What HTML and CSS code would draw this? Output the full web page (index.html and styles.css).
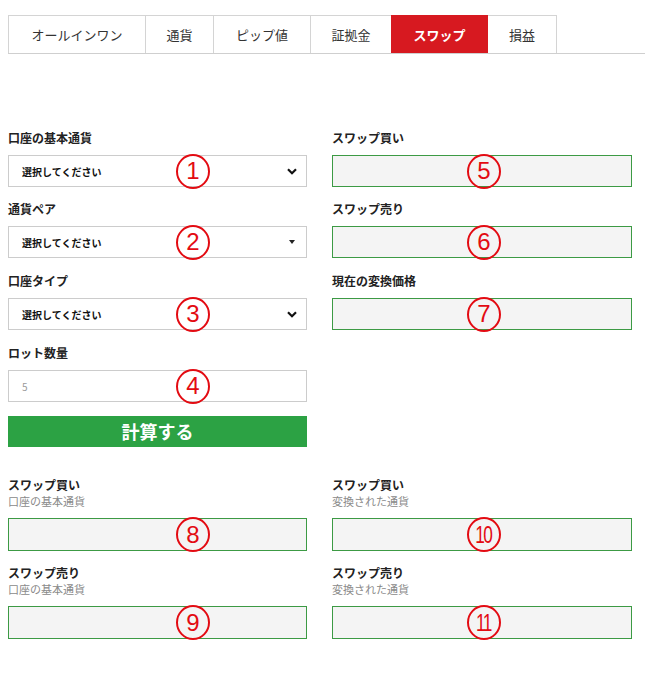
FILE: index.html
```html
<!DOCTYPE html>
<html lang="ja">
<head>
    <meta charset="UTF-8">
    <meta name="viewport" content="width=device-width, initial-scale=1.0">
    <title>スワップ計算機</title>
    <link rel="stylesheet" href="styles.css">
</head>
<body>
    <nav class="tabs">
        <a class="tab tab-all">オールインワン</a>
        <a class="tab tab-cur">通貨</a>
        <a class="tab tab-pip">ピップ値</a>
        <a class="tab tab-margin">証拠金</a>
        <a class="tab tab-swap active">スワップ</a>
        <a class="tab tab-pl">損益</a>
    </nav>

    <div class="calc">
        <div class="col">
            <div class="group">
                <label class="label">口座の基本通貨</label>
                <div class="field select">
                    <span>選択してください</span>
                    <svg class="chevron" width="10" height="7" viewBox="0 0 10 7"><path d="M1 1.2 L5 5.2 L9 1.2" fill="none" stroke="#111" stroke-width="2.2"/></svg>
                    <span class="mark mark-left">1</span>
                </div>
            </div>
            <div class="group">
                <label class="label">通貨ペア</label>
                <div class="field select">
                    <span>選択してください</span>
                    <svg class="caret" width="6" height="4" viewBox="0 0 6 4"><path d="M0 0 L6 0 L3 4 Z" fill="#222"/></svg>
                    <span class="mark mark-left">2</span>
                </div>
            </div>
            <div class="group">
                <label class="label">口座タイプ</label>
                <div class="field select">
                    <span>選択してください</span>
                    <svg class="chevron" width="10" height="7" viewBox="0 0 10 7"><path d="M1 1.2 L5 5.2 L9 1.2" fill="none" stroke="#111" stroke-width="2.2"/></svg>
                    <span class="mark mark-left">3</span>
                </div>
            </div>
            <div class="group">
                <label class="label">ロット数量</label>
                <div class="field input">
                    <span>5</span>
                    <span class="mark mark-left">4</span>
                </div>
            </div>
            <button type="button" class="calc-btn">計算する</button>
        </div>

        <div class="col">
            <div class="group">
                <label class="label">スワップ買い</label>
                <div class="field result">
                    <span class="mark mark-right">5</span>
                </div>
            </div>
            <div class="group">
                <label class="label">スワップ売り</label>
                <div class="field result">
                    <span class="mark mark-right">6</span>
                </div>
            </div>
            <div class="group">
                <label class="label">現在の変換価格</label>
                <div class="field result">
                    <span class="mark mark-right">7</span>
                </div>
            </div>
        </div>
    </div>

    <div class="results">
        <div class="col">
            <div class="out">
                <div class="label">スワップ買い</div>
                <div class="sub">口座の基本通貨</div>
                <div class="field result tall">
                    <span class="mark mark-left">8</span>
                </div>
            </div>
            <div class="out">
                <div class="label">スワップ売り</div>
                <div class="sub">口座の基本通貨</div>
                <div class="field result tall">
                    <span class="mark mark-left">9</span>
                </div>
            </div>
        </div>
        <div class="col">
            <div class="out">
                <div class="label">スワップ買い</div>
                <div class="sub">変換された通貨</div>
                <div class="field result tall">
                    <span class="mark mark-right two"><i>10</i></span>
                </div>
            </div>
            <div class="out">
                <div class="label">スワップ売り</div>
                <div class="sub">変換された通貨</div>
                <div class="field result tall">
                    <span class="mark mark-right two"><i>11</i></span>
                </div>
            </div>
        </div>
    </div>
</body>
</html>
```

FILE: styles.css
```css
body {
    margin: 0;
    padding: 15px 13px 0 8px;
    background-color: #ffffff;
    color: #222;
    font-family: "Noto Sans CJK JP", "Liberation Sans", sans-serif;
}

/* Tabs */
.tabs {
    display: flex;
    margin-right: -13px;
    border-bottom: 1px solid #cfcfcf;
}

.tab {
    box-sizing: border-box;
    height: 38px;
    display: flex;
    align-items: center;
    justify-content: center;
    border: 1px solid #d4d4d4;
    border-bottom: none;
    margin-left: -1px;
    font-size: 13px;
    color: #333;
}

.tab:first-child {
    margin-left: 0;
}

.tab-all { width: 138px; }
.tab-cur { width: 69px; }
.tab-pip { width: 98px; }
.tab-margin { width: 82px; }
.tab-swap { width: 97px; }
.tab-pl { width: 70px; }

.tab.active {
    background-color: #d71920;
    border-color: #d71920;
    color: #ffffff;
    font-weight: bold;
    position: relative;
}

/* Calculator */
.calc,
.results {
    display: grid;
    grid-template-columns: 299px 300px;
    column-gap: 25px;
}

.calc {
    margin-top: 75px;
}

.results {
    margin-top: 29px;
}

.group {
    margin-bottom: 14px;
}

.group:first-child {
    margin-bottom: 13px;
}

.label {
    display: block;
    font-size: 12px;
    line-height: 18px;
    font-weight: bold;
    color: #222;
    margin-bottom: 8px;
}

.field {
    position: relative;
    box-sizing: border-box;
    height: 32px;
    display: flex;
    align-items: center;
}

.select,
.input {
    border: 1px solid #cccccc;
    background-color: #ffffff;
    padding: 0 9px 0 13px;
    font-size: 10px;
}

.select span:first-child {
    font-weight: bold;
    color: #111;
}

.input span:first-child {
    color: #999;
}

.chevron,
.caret {
    margin-left: auto;
}

.caret {
    margin-right: 2px;
}

.result {
    border: 1px solid #3c9a44;
    background-color: #f4f4f4;
}

.calc-btn {
    display: block;
    width: 100%;
    height: 31px;
    margin-top: 14px;
    border: none;
    padding: 0;
    background-color: #2ca244;
    color: #ffffff;
    font-family: inherit;
    font-size: 18px;
    font-weight: bold;
    line-height: 31px;
}

/* Result boxes below */
.out .label {
    line-height: 17px;
    margin-bottom: 0;
}

.out .sub {
    font-size: 11px;
    line-height: 17px;
    color: #8a8a8a;
    margin-bottom: 8px;
}

.out {
    margin-bottom: 13px;
}

.tall {
    height: 33px;
}

/* Red circled annotation numbers */
.mark {
    position: absolute;
    top: 50%;
    width: 30px;
    height: 31px;
    margin-top: -17.5px;
    border: 2px solid #e30b12;
    border-radius: 50%;
    display: flex;
    align-items: center;
    justify-content: center;
    color: #e30b12;
    font-family: "Liberation Sans", sans-serif;
    font-size: 24px;
    line-height: 1;
}

.mark-left {
    left: 167px;
}

.mark-right {
    left: 134px;
}

.mark.two i {
    font-style: normal;
    display: inline-block;
    letter-spacing: -2px;
    transform: scaleX(0.72);
    margin-left: -2px;
}
```
